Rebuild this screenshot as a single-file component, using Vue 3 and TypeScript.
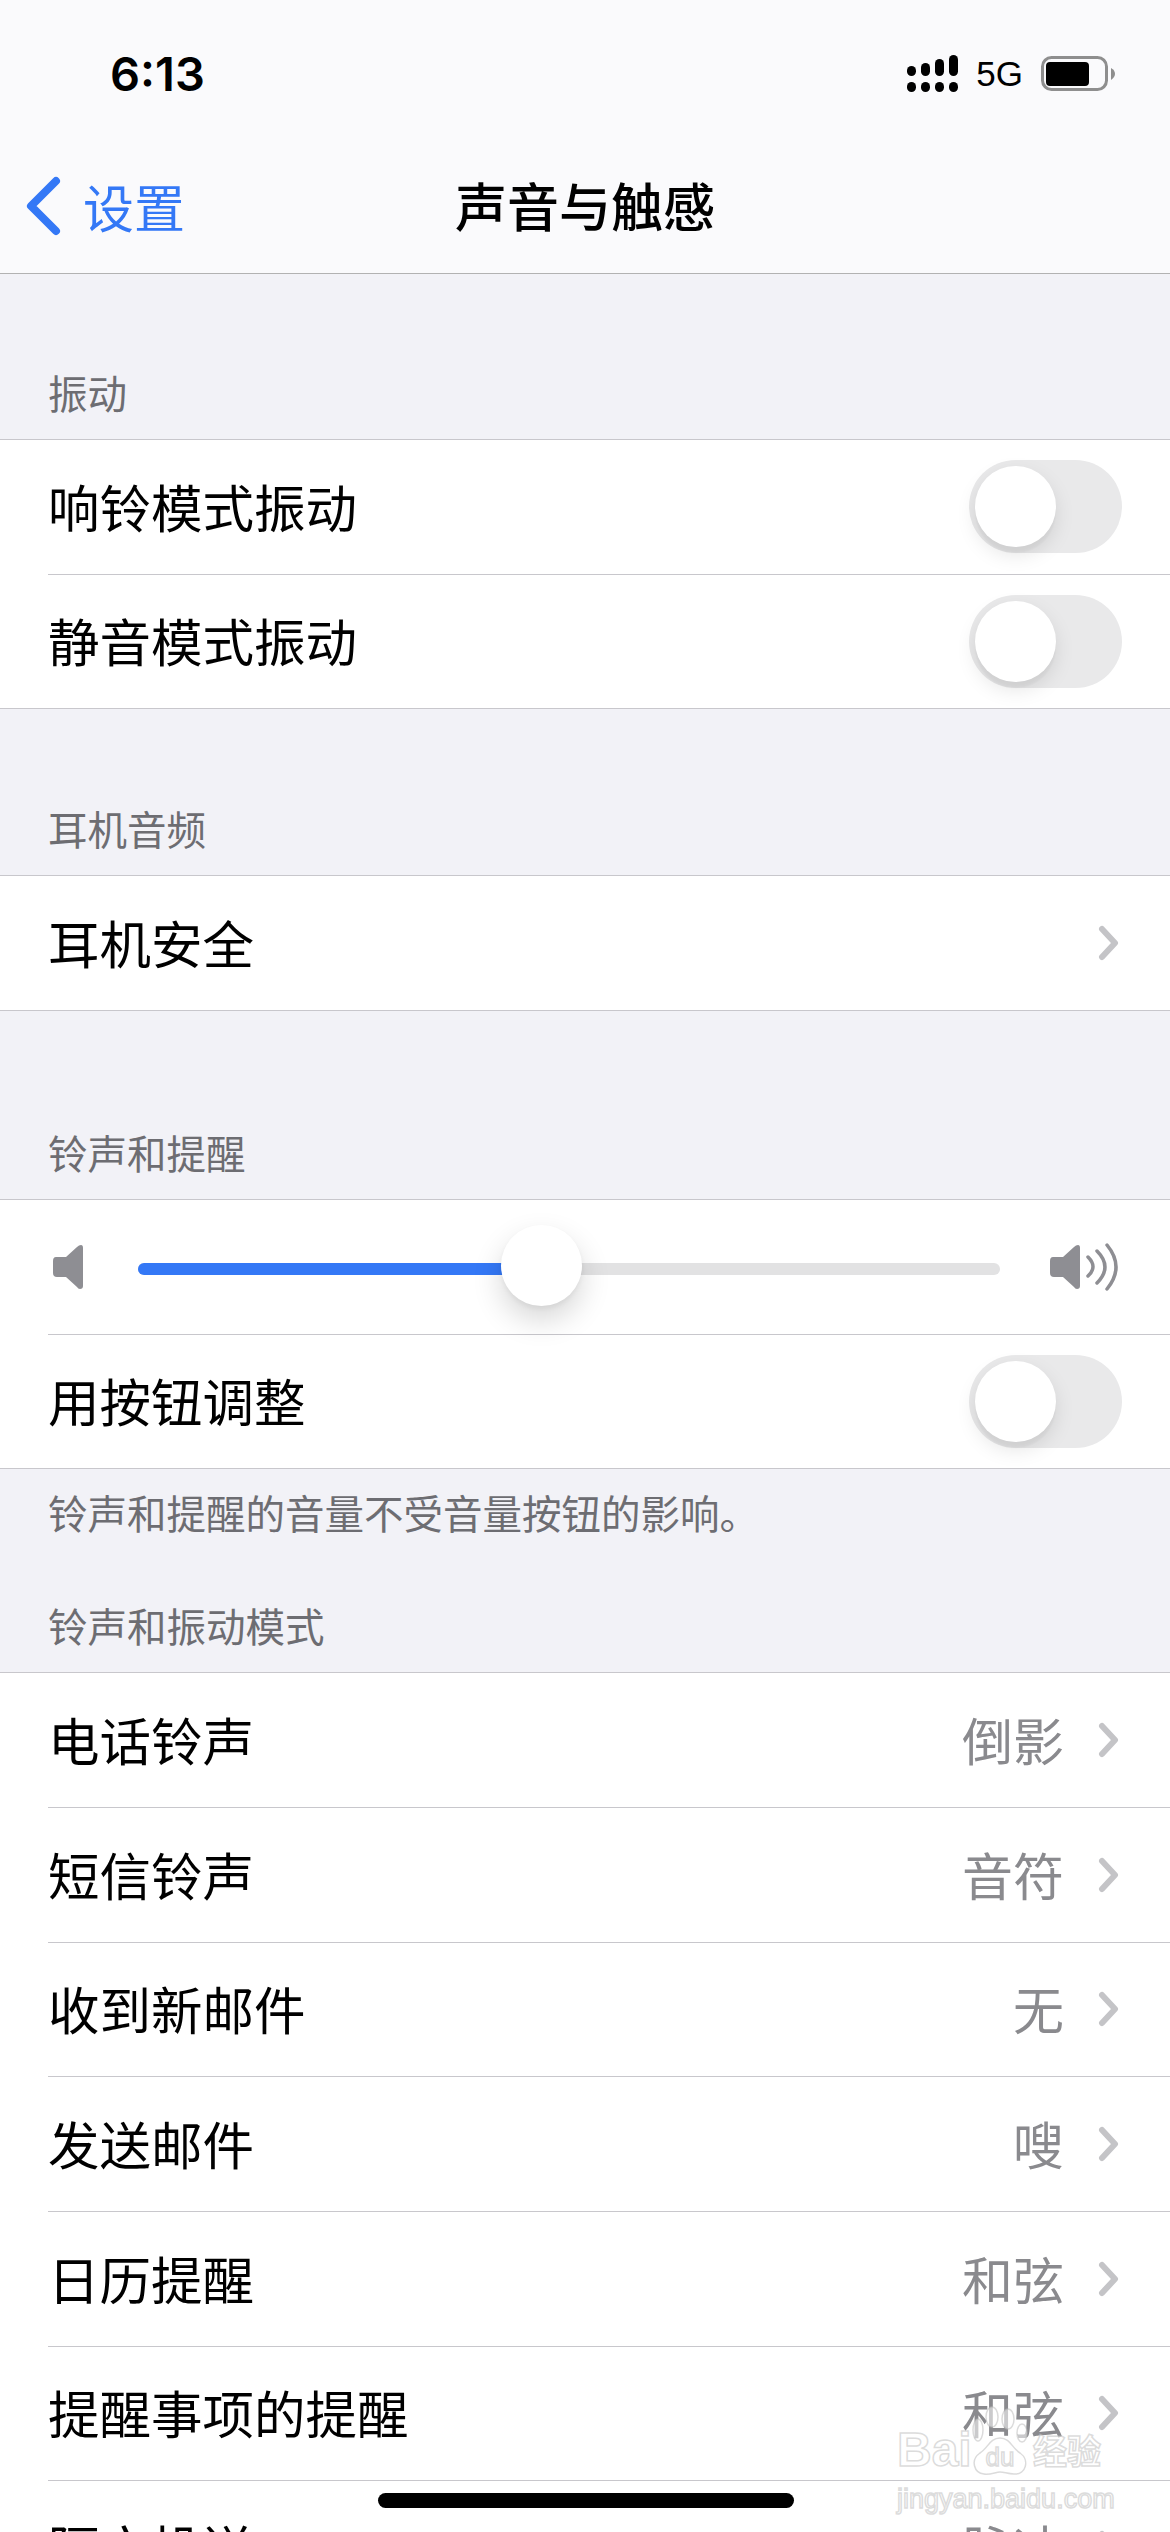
<script setup lang="ts">
interface ToggleRow {
  label: string
}
interface LinkRow {
  label: string
  value?: string
}

const vibrateRows: ToggleRow[] = [{ label: '响铃模式振动' }, { label: '静音模式振动' }]

const soundRows: LinkRow[] = [
  { label: '电话铃声', value: '倒影' },
  { label: '短信铃声', value: '音符' },
  { label: '收到新邮件', value: '无' },
  { label: '发送邮件', value: '嗖' },
  { label: '日历提醒', value: '和弦' },
  { label: '提醒事项的提醒', value: '和弦' },
  { label: '隔空投送', value: '脉冲' },
]

const volume = 46.8
</script>

<template>
  <div class="screen">
    <header class="top">
      <div class="status">
        <span class="time">6:13</span>
        <div class="status-right">
          <svg class="signal" width="51" height="37" viewBox="0 0 51 37" fill="#000">
            <rect x="0" y="11" width="9" height="10" rx="4.5" />
            <rect x="14" y="8" width="9" height="13" rx="4.5" />
            <rect x="28" y="4" width="9" height="17" rx="4.5" />
            <rect x="42" y="0" width="9" height="21" rx="4.5" />
            <rect x="0" y="27" width="9" height="10" rx="4.5" />
            <rect x="14" y="27" width="9" height="10" rx="4.5" />
            <rect x="28" y="27" width="9" height="10" rx="4.5" />
            <rect x="42" y="27" width="9" height="10" rx="4.5" />
          </svg>
          <span class="net">5G</span>
          <svg class="battery" width="74" height="35" viewBox="0 0 74 35">
            <rect x="1.5" y="1.5" width="64" height="32" rx="9" fill="none" stroke="#8e8e8e" stroke-width="3" />
            <rect x="5" y="6" width="43" height="24" rx="4" fill="#000" />
            <path d="M70 12 Q74 14 74 18 Q74 21 70 24 Z" fill="#8e8e8e" />
          </svg>
        </div>
      </div>
      <nav class="nav">
        <div class="back">
          <svg width="40" height="62" viewBox="0 0 40 62" fill="none" stroke="#3478f6" stroke-width="8" stroke-linecap="round" stroke-linejoin="round">
            <path d="M33 6 L8 31 L33 56" />
          </svg>
          <span>设置</span>
        </div>
        <h1 class="title">声音与触感</h1>
        <div></div>
      </nav>
    </header>

    <div class="group-title h165">振动</div>
    <section class="group">
      <div v-for="row in vibrateRows" :key="row.label" class="row">
        <div class="row-inner">
          <span class="label">{{ row.label }}</span>
          <span class="switch"><span class="knob"></span></span>
        </div>
      </div>
    </section>

    <div class="group-title h166">耳机音频</div>
    <section class="group">
      <div class="row">
        <div class="row-inner">
          <span class="label">耳机安全</span>
          <svg class="chevron" width="24" height="36" viewBox="0 0 24 36" fill="none" stroke="#c4c4c7" stroke-width="6" stroke-linecap="round" stroke-linejoin="round">
            <path d="M4 4 L17 18 L4 32" />
          </svg>
        </div>
      </div>
    </section>

    <div class="group-title h188">铃声和提醒</div>
    <section class="group">
      <div class="row">
        <div class="row-inner slider-row">
          <svg class="speaker-low" width="30" height="44" viewBox="0 0 30 44" fill="#8e8e93">
            <path d="M3 12 H13 L24 2 Q26 0 28 0 Q30 0 30 3 V41 Q30 44 27 44 Q25 44 24 42 L13 32 H4 Q0 32 0 28 V16 Q0 12 3 12 Z" />
          </svg>
          <div class="track">
            <div class="fill" :style="{ width: volume + '%' }"></div>
            <div class="thumb" :style="{ left: volume + '%' }"></div>
          </div>
          <svg class="speaker-high" width="68" height="48" viewBox="0 0 68 48" fill="none" stroke="#8e8e93" stroke-linecap="round">
            <path fill="#8e8e93" stroke="none" d="M3 14 H13 L24 4 Q26 2 28 2 Q30 2 30 5 V43 Q30 46 27 46 Q25 46 24 44 L13 34 H4 Q0 34 0 30 V18 Q0 14 3 14 Z" />
            <path stroke-width="3.5" d="M38 14 Q48 24 38 33" />
            <path stroke-width="3.5" d="M47 8 Q63 24 47 40" />
            <path stroke-width="3.5" d="M57 2 Q75 24 57 46" />
          </svg>
        </div>
      </div>
      <div class="row">
        <div class="row-inner">
          <span class="label">用按钮调整</span>
          <span class="switch"><span class="knob"></span></span>
        </div>
      </div>
    </section>

    <p class="note">铃声和提醒的音量不受音量按钮的影响。</p>
    <div class="group-title h-after-note">铃声和振动模式</div>
    <section class="group">
      <div v-for="row in soundRows" :key="row.label" class="row">
        <div class="row-inner">
          <span class="label">{{ row.label }}</span>
          <span class="value">{{ row.value }}</span>
          <svg class="chevron" width="24" height="36" viewBox="0 0 24 36" fill="none" stroke="#c4c4c7" stroke-width="6" stroke-linecap="round" stroke-linejoin="round">
            <path d="M4 4 L17 18 L4 32" />
          </svg>
        </div>
      </div>
    </section>

    <div class="home-bar"></div>

    <div class="watermark">
      <div class="wm-top">
        <span class="wm-bai">Bai</span>
        <svg class="wm-paw" width="60" height="70" viewBox="0 0 60 70" fill="rgba(255,255,255,0.55)" stroke="rgba(190,190,190,0.55)" stroke-width="1.5">
          <ellipse cx="8" cy="24" rx="5" ry="11" />
          <ellipse cx="22" cy="11" rx="6" ry="10" />
          <ellipse cx="38" cy="13" rx="6" ry="10" />
          <ellipse cx="52" cy="27" rx="5" ry="9" />
          <path d="M30 32 C40 32 42 42 50 47 C60 54 56 69 44 68 C38 68 34 66 30 66 C26 66 20 69 14 68 C4 67 0 54 10 47 C18 42 20 32 30 32 Z" />
          <text x="30" y="60" text-anchor="middle" class="wm-du">du</text>
        </svg>
        <span class="wm-jy">经验</span>
      </div>
      <div class="wm-url">jingyan.baidu.com</div>
    </div>
  </div>
</template>

<style>
html,
body {
  margin: 0;
  background: #f2f2f7;
}
</style>

<style scoped>
.screen {
  position: relative;
  width: 1170px;
  height: 2532px;
  overflow: hidden;
  background: #f2f2f7;
  font-family: "Noto Sans CJK SC", "Liberation Sans", sans-serif;
  color: #000;
}

.top {
  height: 273px;
  background: #fafafc;
  border-bottom: 1px solid #b2b2b2;
}

.status {
  height: 139px;
  display: flex;
  align-items: center;
  justify-content: space-between;
  padding: 8px 55px 0 110px;
  box-sizing: border-box;
}

.time {
  font-family: Inter, "Liberation Sans", sans-serif;
  font-weight: 600;
  font-size: 47px;
  line-height: 1;
}

.status-right {
  display: flex;
  align-items: center;
  gap: 18px;
}

.net {
  font-family: "Liberation Sans", sans-serif;
  font-size: 35px;
  line-height: 37px;
}

.nav {
  height: 134px;
  display: grid;
  grid-template-columns: 1fr auto 1fr;
  align-items: center;
}

.back {
  display: flex;
  align-items: center;
  gap: 20px;
  padding-left: 23px;
  color: #3478f6;
  font-size: 51px;
}

.title {
  margin: 0 0 3px;
  font-size: 52px;
  font-weight: 500;
}

.group-title {
  box-sizing: border-box;
  display: flex;
  align-items: flex-end;
  padding: 0 48px 24px;
  font-size: 39.5px;
  line-height: 46px;
  color: #6d6d72;
}

.h165 {
  height: 165px;
}

.h166 {
  height: 166px;
}

.h188 {
  height: 188px;
}

.h-after-note {
  height: 95px;
}

.group {
  background: #fff;
  border-top: 1px solid #c8c7cc;
  border-bottom: 1px solid #c8c7cc;
}

.row {
  padding-left: 48px;
}

.row-inner {
  box-sizing: border-box;
  height: 134.67px;
  display: flex;
  align-items: center;
  padding-right: 48px;
  border-bottom: 1px solid #c8c7cc;
}

.row:last-child .row-inner {
  height: 133.67px;
  border-bottom: none;
}

.label {
  flex: 1;
  margin-bottom: 2px;
  font-size: 51.5px;
  line-height: 60px;
}

.value {
  margin: 0 34px 2px 0;
  font-size: 51px;
  line-height: 60px;
  color: #8a8a8e;
}

.switch {
  position: relative;
  width: 153px;
  height: 93px;
  border-radius: 47px;
  background: #e9e9ea;
}

.knob {
  position: absolute;
  left: 6px;
  top: 6px;
  width: 81px;
  height: 81px;
  border-radius: 50%;
  background: #fff;
  box-shadow: 0 8px 20px rgba(0, 0, 0, 0.1), 0 6px 2px rgba(0, 0, 0, 0.03);
}

.slider-row {
  padding-right: 52px;
}

.speaker-low {
  margin-left: 5px;
}

.track {
  position: relative;
  flex: 1;
  height: 12px;
  margin: 4px 50px 0 55px;
  border-radius: 6px;
  background: #e2e2e3;
}

.fill {
  height: 100%;
  border-radius: 6px 0 0 6px;
  background: #3478f6;
}

.thumb {
  position: absolute;
  top: -38px;
  width: 81px;
  height: 81px;
  margin-left: -40px;
  border-radius: 50%;
  background: #fff;
  box-shadow: 0 14px 30px rgba(0, 0, 0, 0.16), 0 3px 5px rgba(0, 0, 0, 0.05);
}

.note {
  margin: 0;
  padding: 20px 48px 0;
  font-size: 39.5px;
  line-height: 46px;
  color: #6d6d72;
  height: 108px;
  box-sizing: border-box;
}

.home-bar {
  position: absolute;
  left: 378px;
  top: 2493px;
  width: 416px;
  height: 15px;
  border-radius: 8px;
  background: #000;
}

.watermark {
  position: absolute;
  left: 897px;
  top: 2406px;
  width: 212px;
  font-family: "Liberation Sans", sans-serif;
  color: rgba(255, 255, 255, 0.6);
  -webkit-text-stroke: 1.5px rgba(190, 190, 190, 0.55);
}

.wm-top {
  display: flex;
  align-items: flex-end;
  height: 70px;
}

.wm-bai {
  width: 73px;
  margin-bottom: -3px;
  font-size: 48px;
  line-height: 58px;
  font-weight: 700;
}

.wm-paw {
  flex: none;
}

.wm-du {
  font-size: 26px;
  font-family: "Liberation Sans", sans-serif;
}

.wm-jy {
  font-family: "Noto Sans CJK SC", sans-serif;
  font-size: 34px;
  line-height: 52px;
  font-weight: 700;
  margin-left: 3px;
  white-space: nowrap;
}

.wm-url {
  font-size: 27px;
  line-height: 30px;
  margin-top: 8px;
  white-space: nowrap;
}
</style>
